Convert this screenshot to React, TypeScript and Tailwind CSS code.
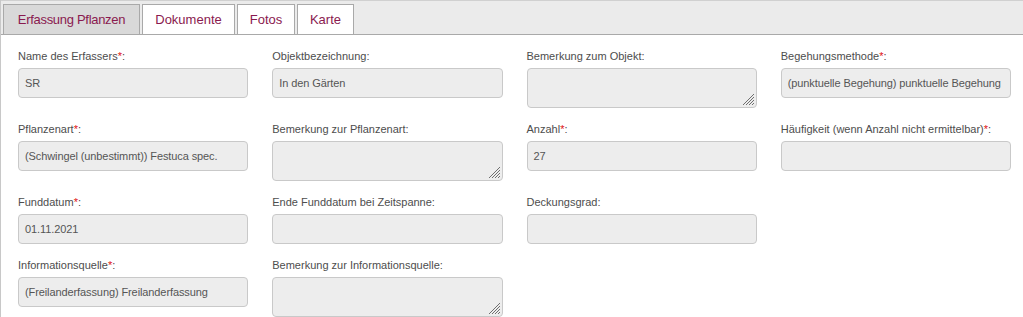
import React from "react";

type Field = { label: string; req?: boolean; value?: string; area?: boolean } | null;

const rows: Field[][] = [
  [
    { label: "Name des Erfassers", req: true, value: "SR" },
    { label: "Objektbezeichnung", value: "In den Gärten" },
    { label: "Bemerkung zum Objekt", area: true },
    { label: "Begehungsmethode", req: true, value: "(punktuelle Begehung) punktuelle Begehung" },
  ],
  [
    { label: "Pflanzenart", req: true, value: "(Schwingel (unbestimmt)) Festuca spec." },
    { label: "Bemerkung zur Pflanzenart", area: true },
    { label: "Anzahl", req: true, value: "27" },
    { label: "Häufigkeit (wenn Anzahl nicht ermittelbar)", req: true, value: "" },
  ],
  [
    { label: "Funddatum", req: true, value: "01.11.2021" },
    { label: "Ende Funddatum bei Zeitspanne", value: "" },
    { label: "Deckungsgrad", value: "" },
    null,
  ],
  [
    { label: "Informationsquelle", req: true, value: "(Freilanderfassung) Freilanderfassung" },
    { label: "Bemerkung zur Informationsquelle", area: true },
    null,
    null,
  ],
];

const tabs = [
  { t: "Erfassung Pflanzen", w: "w-[137px]" },
  { t: "Dokumente", w: "w-[93px]" },
  { t: "Fotos", w: "w-[58px]" },
  { t: "Karte", w: "w-[57px]" },
];

function Grip() {
  return (
    <svg
      className="absolute bottom-[2px] right-[2px]"
      width="12"
      height="12"
      viewBox="0 0 12 12"
      stroke="#6f6f6f"
      strokeWidth="1"
    >
      <line x1="1" y1="12" x2="12" y2="1" />
      <line x1="4" y1="12" x2="12" y2="4" />
      <line x1="7" y1="12" x2="12" y2="7" />
      <line x1="10" y1="12" x2="12" y2="10" />
    </svg>
  );
}

function FieldCell({ f }: { f: Field }) {
  if (!f) return <div />;
  return (
    <div className="flex flex-col">
      <div className="h-[16px] leading-[16px] text-[11px] text-[#4d4d4d] whitespace-nowrap">
        {f.label}
        {f.req && <span className="text-[#e01010]">*</span>}:
      </div>
      {f.area ? (
        <div className="relative mt-[4px] h-[40px] w-full rounded-[4px] border border-[#c9c9c9] bg-[#ededed]">
          <Grip />
        </div>
      ) : (
        <div className="mt-[4px] flex h-[30px] items-center rounded-[4px] border border-[#c9c9c9] bg-[#ededed] px-[6px] text-[11px] tracking-[-0.1px] text-[#555555] whitespace-nowrap overflow-hidden">
          {f.value}
        </div>
      )}
    </div>
  );
}

export default function App() {
  return (
    <div
      className="h-[317px] w-[1023px] overflow-hidden border-l border-[#c8c8c8] bg-white"
      style={{ fontFamily: '"Liberation Sans", Arial, sans-serif' }}
    >
      <div className="flex h-[35px] items-end gap-[2px] border-t border-b border-t-[#d0d0d0] border-b-[#a9a9a9] bg-[#ebebeb] pl-[2px]">
        {tabs.map((t, i) => (
          <div
            key={t.t}
            className={
              "-mb-px flex h-[31px] items-center justify-center border border-[#a9a9a9] text-[13px] text-[#8a1a4f] whitespace-nowrap " +
              t.w +
              (i === 0 ? " bg-[#d9d9d9]" : " bg-white")
            }
          >
            <span className={i === 0 ? "tracking-[-0.3px]" : ""}>{t.t}</span>
          </div>
        ))}
      </div>
      <div className="grid grid-cols-4 gap-x-[24px] gap-y-[13px] pl-[17px] pr-[12px] pt-[13px]">
        {rows.map((r, ri) =>
          r.map((f, ci) => <FieldCell key={ri + "-" + ci} f={f} />)
        )}
      </div>
    </div>
  );
}
